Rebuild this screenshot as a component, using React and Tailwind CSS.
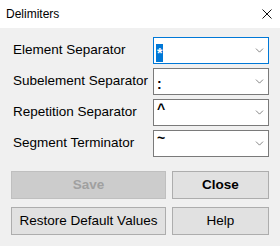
import { ChevronDown } from 'lucide-react'

const rows = [
  { label: 'Element Separator', value: '*', focused: true, shift: '' },
  { label: 'Subelement Separator', value: ':', shift: '' },
  { label: 'Repetition Separator', value: '^', shift: '-translate-y-[6px]' },
  { label: 'Segment Terminator', value: '~', shift: '-translate-y-[8px]' },
]

function Combo({ value, focused, shift }) {
  return (
    <div
      className={`flex h-[27px] w-[116px] items-start bg-white border ${
        focused ? 'border-[#0078d7]' : 'border-[#7a7a7a]'
      }`}
    >
      <div className="flex-1 pl-[2px] pt-[3px]">
        <span
          className={`inline-block h-[18px] px-[1px] text-[14px] font-bold leading-[18px] ${shift} ${
            focused ? 'bg-[#0078d7] text-white' : 'text-black'
          }`}
        >
          {value}
        </span>
      </div>
      <div className="flex h-full w-[17px] items-center justify-center">
        <ChevronDown size={13} strokeWidth={1.1} className="text-[#333]" />
      </div>
    </div>
  )
}

export default function App() {
  return (
    <div className="h-[246px] w-[280px] bg-[#f0f0f0] font-['Liberation_Sans',Arial,sans-serif] text-black">
      <div className="flex h-[28px] items-center justify-between bg-white pl-[6px] pr-[8px]">
        <span className="text-[12px]">Delimiters</span>
        <svg width="10" height="10" viewBox="0 0 10 10">
          <path d="M0.5 0.5 L9.5 9.5 M9.5 0.5 L0.5 9.5" stroke="#111" strokeWidth="1" />
        </svg>
      </div>

      <div className="px-[11px] pt-[9px]">
        <div className="flex flex-col gap-[4px]">
          {rows.map((r) => (
            <div key={r.label} className="flex items-center justify-between">
              <span className="pl-[2px] text-[13.5px]">{r.label}</span>
              <Combo value={r.value} focused={r.focused} shift={r.shift} />
            </div>
          ))}
        </div>

        <div className="mt-[14px] grid grid-cols-[155px_97px] gap-x-[6px] gap-y-[8px]">
          <button className="h-[28px] border border-[#bfbfbf] bg-[#cccccc] text-[13.5px] font-bold text-[#a0a0a0]">
            Save
          </button>
          <button className="h-[28px] border border-[#adadad] bg-[#e1e1e1] text-[13.5px] font-bold">
            Close
          </button>
          <button className="h-[28px] border border-[#adadad] bg-[#e1e1e1] text-[13.5px]">
            Restore Default Values
          </button>
          <button className="h-[28px] border border-[#adadad] bg-[#e1e1e1] text-[13.5px]">
            Help
          </button>
        </div>
      </div>
    </div>
  )
}
